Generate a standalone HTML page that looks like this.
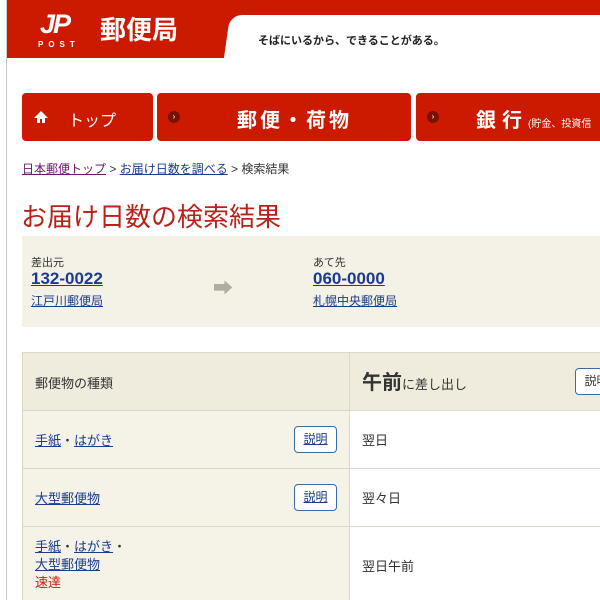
<!DOCTYPE html>
<html style="width:600px;height:600px;overflow:hidden"><head><meta charset="utf-8"><style>
*{margin:0;padding:0;box-sizing:border-box}
body{width:600px;height:600px;overflow:hidden;background:#fff;font-family:"Liberation Sans","Noto Sans CJK JP",sans-serif;position:relative;color:#333}
.a{position:absolute}
a{color:#1a3c8c;text-decoration:underline}
.btn{position:absolute;background:#cc1a00;border-radius:4px;color:#fff}
.dot{position:absolute;width:12px;height:12px;border-radius:50%;background:#7a1005;color:#fff;font-size:8px;line-height:12px;text-align:center}
.cell{position:absolute;border:1px solid #dcd8c8}
.sm{position:absolute;border:1px solid #3a6aa8;border-radius:4px;width:43px;height:27px;font-size:12px;line-height:25px;text-align:center;background:#fff}
</style></head><body>
<div class="a" style="left:6px;top:0;width:1px;height:600px;background:#ccc"></div>
<div class="a" style="left:7px;top:0;width:593px;height:58px;background:#cc1a00"></div>
<div class="a" style="left:230px;top:15px;width:420px;height:45px;background:#fff;border-top-left-radius:12px;transform:skewX(-8deg);transform-origin:0 0"></div>
<div class="a" style="left:7px;top:58px;width:593px;height:10px;background:#fff"></div>
<div class="a" style="left:40px;top:10px;color:#fff;font-weight:bold;font-style:italic;font-size:27px;line-height:28px;letter-spacing:-2px">JP</div>
<div class="a" style="left:38px;top:40px;color:#fff;font-weight:bold;font-size:8px;letter-spacing:5px">POST</div>
<div class="a" style="left:100px;top:14px;color:#fff;font-weight:bold;font-size:26px;line-height:32px">郵便局</div>
<div class="a" style="left:258px;top:32px;font-size:11px;font-weight:bold;color:#222">そばにいるから、できることがある。</div>
<div class="btn" style="left:22px;top:93px;width:131px;height:48px"><svg class="a" style="left:12px;top:17px" width="14" height="14" viewBox="0 0 14 14"><path d="M7 1L0 8h3v5h3V9h2v4h3V8h3z" fill="#fff"/></svg><span class="a" style="left:46px;top:14px;font-size:16px">トップ</span></div>
<div class="btn" style="left:157px;top:93px;width:254px;height:48px"><span class="dot" style="left:11px;top:18px">›</span><span class="a" style="left:80px;top:11px;font-size:20px;letter-spacing:3px;font-weight:bold">郵便・荷物</span></div>
<div class="btn" style="left:416px;top:93px;width:200px;height:48px"><span class="dot" style="left:11px;top:18px">›</span><span class="a" style="left:60px;top:11px;font-size:20px;font-weight:bold;white-space:nowrap;letter-spacing:6px">銀行<span style="font-size:10px;letter-spacing:0;font-weight:normal">(貯金、投資信</span></span></div>
<div class="a" style="left:22px;top:160px;font-size:12px;white-space:nowrap"><a style="color:#6a1a6a">日本郵便トップ</a> &gt; <a>お届け日数を調べる</a> &gt; 検索結果</div>
<div class="a" style="left:21px;top:197px;font-size:26px;color:#b8221a;white-space:nowrap">お届け日数の検索結果</div>
<div class="a" style="left:22px;top:236px;width:578px;height:91px;background:#f4f1e6"></div>
<div class="a" style="left:31px;top:254px;font-size:11px">差出元</div>
<div class="a" style="left:31px;top:269px;font-size:17px;font-weight:bold"><a>132-0022</a></div>
<div class="a" style="left:31px;top:292px;font-size:12px"><a>江戸川郵便局</a></div>
<div class="a" style="left:213px;top:272px;color:#b0ad9f;font-size:20px">➡</div>
<div class="a" style="left:313px;top:254px;font-size:11px">あて先</div>
<div class="a" style="left:313px;top:269px;font-size:17px;font-weight:bold"><a>060-0000</a></div>
<div class="a" style="left:313px;top:292px;font-size:12px"><a>札幌中央郵便局</a></div>
<div class="cell" style="left:22px;top:352px;width:328px;height:59px;background:#efebdd"></div>
<div class="cell" style="left:349px;top:352px;width:260px;height:59px;background:#efebdd"></div>
<div class="a" style="left:35px;top:373px;font-size:13px">郵便物の種類</div>
<div class="a" style="left:362px;top:366px;font-size:13px;white-space:nowrap"><b style="font-size:20px">午前</b>に差し出し</div>
<div class="sm" style="left:575px;top:368px">説明</div>
<div class="cell" style="left:22px;top:410px;width:328px;height:59px;background:#f5f2e8"></div>
<div class="cell" style="left:349px;top:410px;width:260px;height:59px"></div>
<div class="a" style="left:35px;top:430px;font-size:13px"><a>手紙</a>・<a>はがき</a></div>
<div class="sm" style="left:294px;top:426px"><a>説明</a></div>
<div class="a" style="left:362px;top:430px;font-size:13px">翌日</div>
<div class="cell" style="left:22px;top:468px;width:328px;height:59px;background:#f5f2e8"></div>
<div class="cell" style="left:349px;top:468px;width:260px;height:59px"></div>
<div class="a" style="left:35px;top:488px;font-size:13px"><a>大型郵便物</a></div>
<div class="sm" style="left:294px;top:484px"><a>説明</a></div>
<div class="a" style="left:362px;top:488px;font-size:13px">翌々日</div>
<div class="cell" style="left:22px;top:526px;width:328px;height:90px;background:#f5f2e8"></div>
<div class="cell" style="left:349px;top:526px;width:260px;height:90px"></div>
<div class="a" style="left:35px;top:538px;font-size:13px;line-height:18px"><a>手紙</a>・<a>はがき</a>・<br><a>大型郵便物</a><br><span style="color:#c0201a">速達</span></div>
<div class="a" style="left:362px;top:556px;font-size:13px">翌日午前</div>
</body></html>
